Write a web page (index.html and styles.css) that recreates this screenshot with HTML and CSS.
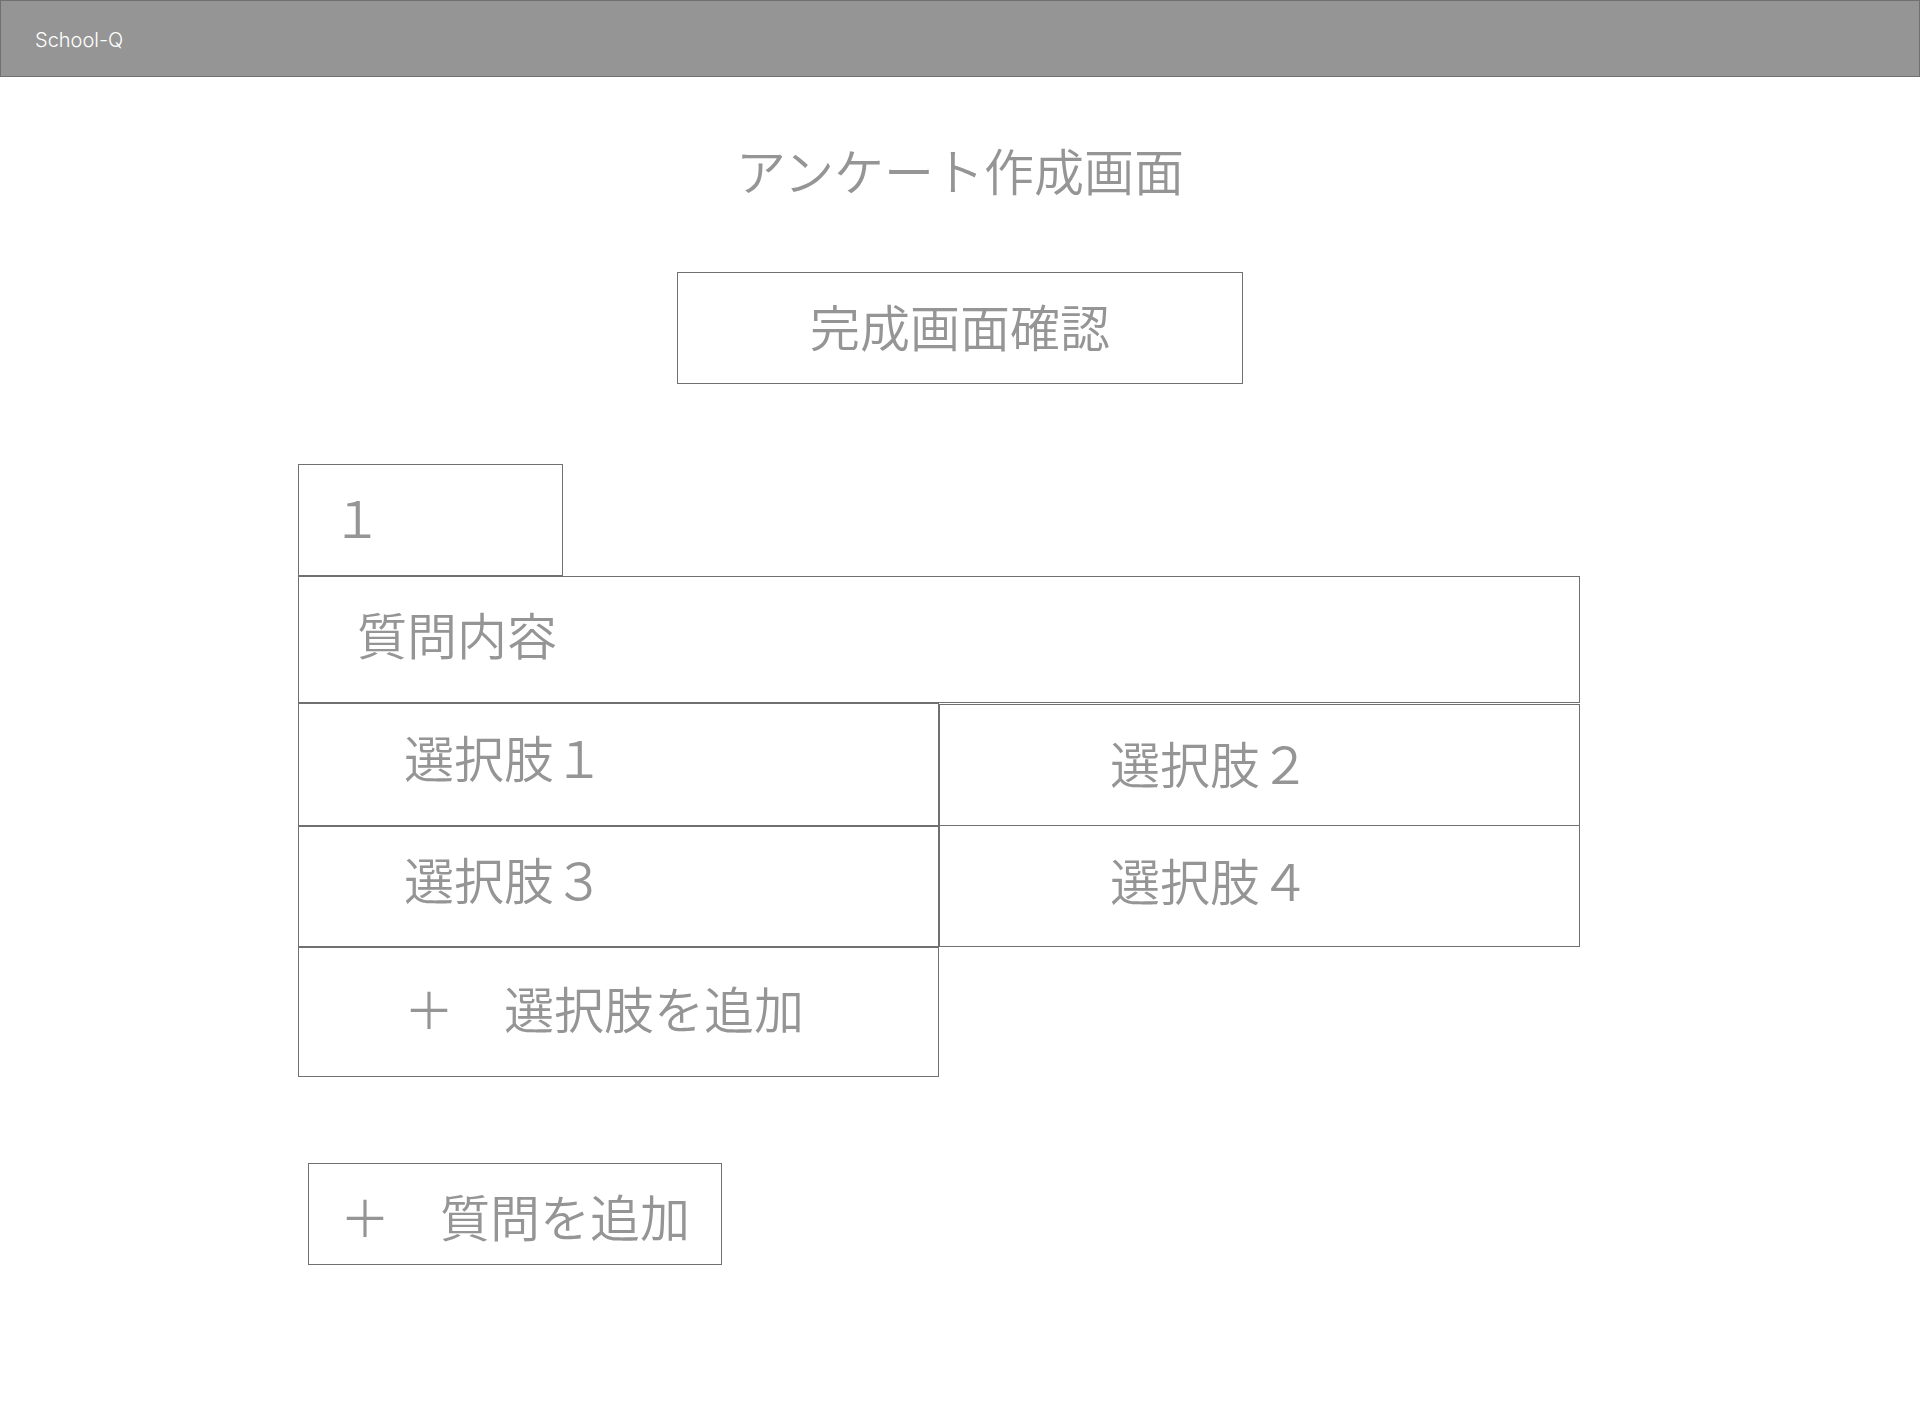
FILE: index.html
```html
<!DOCTYPE html>
<html lang="ja">
<head>
  <meta charset="utf-8">
  <meta name="viewport" content="width=device-width, initial-scale=1">
  <title>アンケート作成画面 | School-Q</title>
  <link rel="stylesheet" href="styles.css">
</head>
<body>
  <header class="site-header">
    <a class="brand" href="#">School-Q</a>
  </header>
  <main class="page">
    <h1 class="title">アンケート作成画面</h1>
    <button class="box preview" type="button">完成画面確認</button>
    <div class="editor">
      <form class="question">
        <h2 class="box number">１</h2>
        <input class="box question-text" type="text" aria-label="質問内容" value="質問内容">
        <div class="choices">
          <div class="column column-left">
            <input class="box choice" type="text" aria-label="選択肢１" value="選択肢１">
            <input class="box choice" type="text" aria-label="選択肢３" value="選択肢３">
            <button class="box add-choice" type="button">＋　選択肢を追加</button>
          </div>
          <div class="column column-right">
            <input class="box choice" type="text" aria-label="選択肢２" value="選択肢２">
            <input class="box choice" type="text" aria-label="選択肢４" value="選択肢４">
          </div>
        </div>
      </form>
      <button class="box add-question" type="button">＋　質問を追加</button>
    </div>
  </main>
</body>
</html>
```
FILE: styles.css
```css
* {
  box-sizing: border-box;
}

body {
  margin: 0;
  background: #fff;
  color: #959595;
  font-family: "Noto Sans CJK JP", sans-serif;
  font-weight: 350;
}

.site-header {
  display: flex;
  align-items: center;
  height: 77px;
  padding: 2px 34px 0;
  border: 1px solid #707070;
  background: #959595;
}

.brand {
  color: #fff;
  font-family: Inter, sans-serif;
  font-size: 20px;
  font-weight: 300;
  line-height: 24px;
  text-decoration: none;
}

.page {
  display: flex;
  flex-direction: column;
  align-items: center;
  padding: 62px 0 80px;
}

.title,
.box {
  margin: 0;
  font-family: inherit;
  font-size: 50px;
  font-weight: inherit;
  line-height: 60px;
  color: inherit;
}

.box {
  border: 1px solid #707070;
  border-radius: 0;
  background: #fff;
  text-align: left;
}

.preview {
  width: 566px;
  height: 112px;
  margin-top: 73px;
  padding: 0 0 6px;
  text-align: center;
}

.editor {
  width: 100%;
  margin-top: 80px;
  padding: 0 340px 0 298px;
}

.number {
  width: 265px;
  height: 112px;
  padding: 21px 33px;
}

.question-text {
  display: block;
  width: 100%;
  height: 127px;
  padding: 0 58px 14px;
}

.choices {
  display: flex;
  align-items: flex-start;
}

.column {
  display: flex;
  flex: 1;
  flex-direction: column;
  min-width: 0;
}

.choice {
  width: 100%;
  height: 122px;
}

.column-left .choice {
  padding: 0 105px 18px;
}

.column-left .choice:first-child {
  height: 123px;
}

.column-left .choice + .choice {
  height: 121px;
}

.column-right {
  padding-top: 1px;
}

.column-right .choice {
  padding: 0 170px 6px;
}

.column-right .choice + .choice {
  margin-top: -1px;
  padding-bottom: 14px;
}

.add-choice {
  height: 130px;
  padding: 0 105px 10px;
}

.add-question {
  height: 102px;
  margin: 86px 0 0 10px;
  padding: 2px 31px 0;
}
```
